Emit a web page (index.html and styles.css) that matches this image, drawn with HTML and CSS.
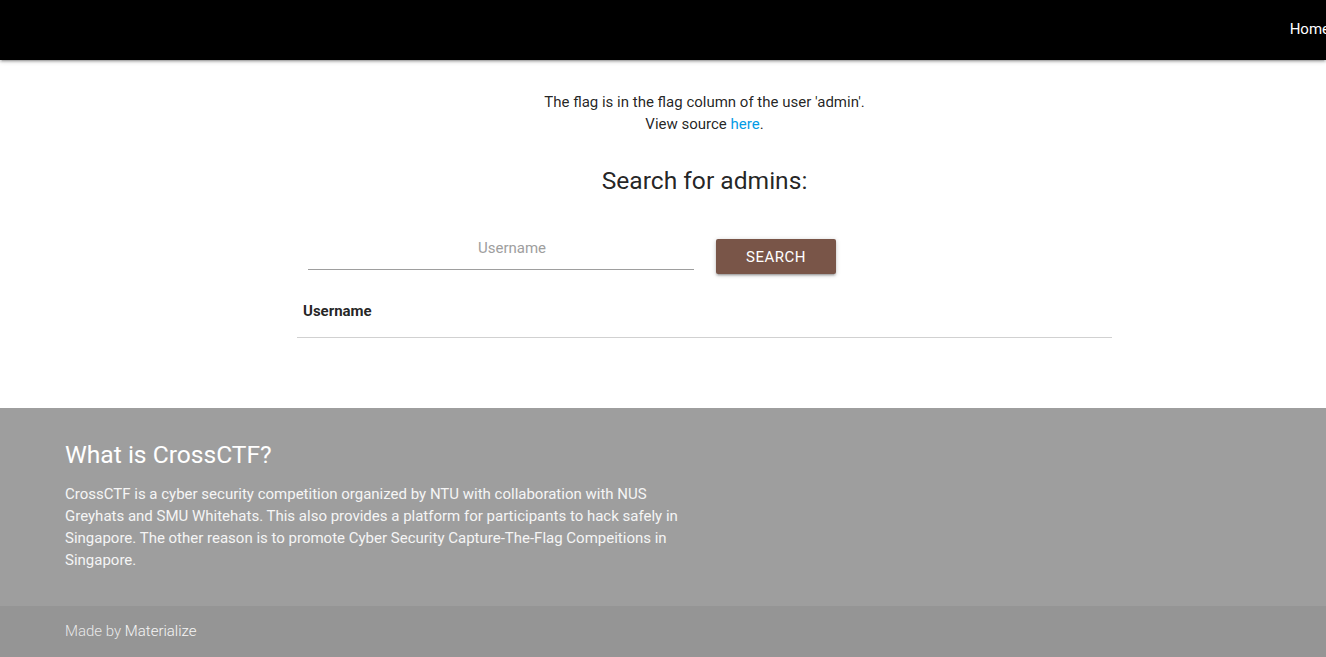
FILE: index.html
```html
<!DOCTYPE html>
<html lang="en">
<head>
<meta charset="utf-8">
<title>CrossCTF</title>
<link rel="stylesheet" href="styles.css">
</head>
<body>
<nav class="nav">
  <div class="nav-wrapper">
    <ul class="nav-links">
      <li><a href="#" class="nav-link">Home</a></li>
    </ul>
  </div>
</nav>

<main class="main">
  <p class="intro">The flag is in the flag column of the user 'admin'.<br>View source <a href="#" class="link">here</a>.</p>
  <h5 class="title">Search for admins:</h5>
  <form class="search-form">
    <div class="input-field">
      <input type="text" class="input" placeholder="Username">
    </div>
    <button type="button" class="btn">Search</button>
  </form>
  <table class="table">
    <thead>
      <tr><th class="th">Username</th></tr>
    </thead>
  </table>
</main>

<footer class="footer">
  <div class="footer-inner">
    <h5 class="footer-title">What is CrossCTF?</h5>
    <p class="footer-text">CrossCTF is a cyber security competition organized by NTU with collaboration with NUS Greyhats and SMU Whitehats. This also provides a platform for participants to hack safely in Singapore. The other reason is to promote Cyber Security Capture-The-Flag Compeitions in Singapore.</p>
  </div>
  <div class="footer-copyright">
    <span class="made">Made by <a href="#" class="made-link">Materialize</a></span>
  </div>
</footer>
</body>
</html>
```

FILE: styles.css
```css
html, body {
  margin: 0;
  padding: 0;
  overflow-x: hidden;
}
body {
  font-family: Roboto, "Liberation Sans", sans-serif;
  font-size: 15px;
  line-height: 1.5;
  color: rgba(0, 0, 0, 0.87);
  background: #fff;
}
.nav {
  height: 60px;
  background: #000;
  box-shadow: 0 2px 2px 0 rgba(0,0,0,.14), 0 3px 1px -2px rgba(0,0,0,.12), 0 1px 5px 0 rgba(0,0,0,.2);
  position: relative;
  z-index: 1;
}
.nav-wrapper {
  height: 100%;
  display: flex;
  justify-content: flex-end;
  margin-right: -19px;
}
.nav-links {
  list-style: none;
  margin: 0;
  padding: 0;
  display: flex;
}
.nav-link {
  display: block;
  padding: 0 15px;
  line-height: 58px;
  color: #fff;
  text-decoration: none;
  font-size: 15px;
}
.main {
  width: 815px;
  margin-left: 297px;
  padding-top: 31px;
  padding-bottom: 70px;
}
.intro {
  margin: 0;
  text-align: center;
  line-height: 22px;
}
.link {
  color: #039be5;
  text-decoration: none;
}
.title {
  margin: 32px 0 0;
  font-size: 24.6px;
  font-weight: 400;
  line-height: 27px;
  text-align: center;
}
.search-form {
  display: flex;
  align-items: flex-start;
  margin: 31px 0 0;
  padding-left: 11px;
  height: 50px;
}
.input-field {
  width: 386px;
}
.input {
  display: block;
  box-sizing: border-box;
  width: 100%;
  height: 45px;
  border: none;
  border-bottom: 1px solid #9e9e9e;
  outline: none;
  padding: 2px 0 0 22px;
  margin: 0;
  background: transparent;
  font-family: Roboto, "Liberation Sans", sans-serif;
  font-size: 15px;
  text-align: center;
  color: rgba(0,0,0,0.87);
}
.input::placeholder {
  color: #9e9e9e;
}
.btn {
  margin: 14px 0 0 22px;
  width: 120px;
  height: 35px;
  border: none;
  border-radius: 2px;
  background: #795548;
  color: #fff;
  font-family: Roboto, "Liberation Sans", sans-serif;
  font-size: 15px;
  letter-spacing: 0.5px;
  text-transform: uppercase;
  padding: 0;
  box-shadow: 0 2px 2px 0 rgba(0,0,0,.14), 0 3px 1px -2px rgba(0,0,0,.12), 0 1px 5px 0 rgba(0,0,0,.2);
}
.table {
  width: 100%;
  border-collapse: collapse;
  margin-top: 9px;
}
.th {
  text-align: left;
  padding: 16px 6px 14px;
  font-weight: 700;
  line-height: 22.5px;
  border-bottom: 1px solid rgba(0,0,0,0.18);
}
.footer {
  background: #9e9e9e;
}
.footer-inner {
  padding: 33px 0 35px 65px;
}
.footer-title {
  margin: 0;
  font-size: 24.6px;
  font-weight: 400;
  line-height: 27px;
  color: #fff;
}
.footer-text {
  margin: 15px 0 0;
  width: 630px;
  line-height: 22.2px;
  color: #f5f5f5;
}
.footer-copyright {
  height: 51px;
  line-height: 50px;
  padding-left: 65px;
  background: rgba(51, 51, 51, 0.08);
  color: rgba(255, 255, 255, 0.8);
  font-weight: 300;
}
.made-link {
  color: #f5f5f5;
  text-decoration: none;
}
```
